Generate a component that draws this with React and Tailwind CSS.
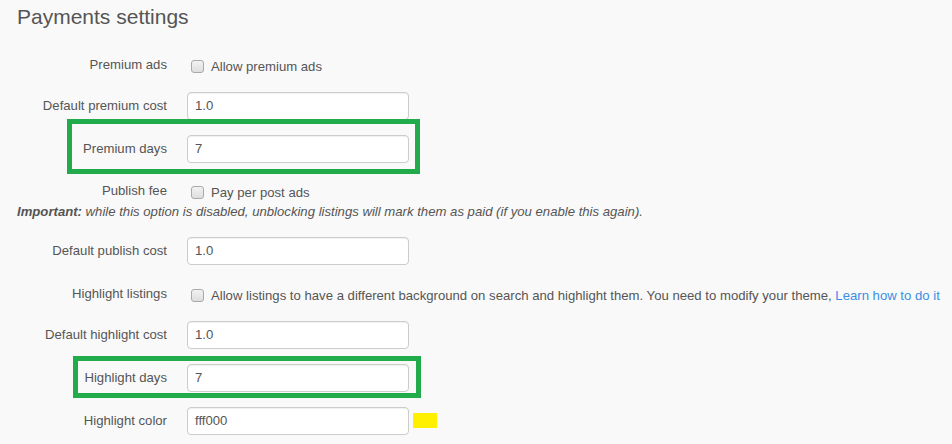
import React from "react";

const font = { fontFamily: '"Liberation Sans", Arial, sans-serif' };

function Label({ children }) {
  return (
    <div className="w-[167px] shrink-0 text-right text-[13.15px] text-[#555]">
      {children}
    </div>
  );
}

function TextInput({ value }) {
  return (
    <div className="flex h-[28px] w-[222px] items-center rounded-[4px] border border-[#ccc] bg-white pl-[7px] text-[13.15px] text-[#555] shadow-[inset_0_1px_1px_rgba(0,0,0,0.06)]">
      {value}
    </div>
  );
}

function Checkbox() {
  return (
    <span className="inline-block h-[13px] w-[13px] shrink-0 rounded-[3px] border border-[#a9a9a9] bg-gradient-to-b from-[#f2f2f2] to-[#dedede]" />
  );
}

function InputRow({ label, value, className = "", children }) {
  return (
    <div className={"relative flex items-center gap-[20px] " + className}>
      <Label>{label}</Label>
      <TextInput value={value} />
      {children}
    </div>
  );
}

function CheckRow({ label, text, className = "" }) {
  return (
    <div className={"flex h-[20px] items-start gap-[24px] " + className}>
      <div className="w-[167px] shrink-0 text-right text-[13.15px] leading-[20px] text-[#555]">
        {label}
      </div>
      <div className="flex items-start gap-[7px] whitespace-nowrap pt-[3px] text-[13.15px] leading-[20px] text-[#555]">
        <span className="mt-[2px] flex">
          <Checkbox />
        </span>
        <span className="-mt-[1px]">{text}</span>
      </div>
    </div>
  );
}

function Highlight({ className }) {
  return (
    <div
      className={
        "pointer-events-none absolute border-[5px] border-[#22ab4b] " + className
      }
    />
  );
}

export default function App() {
  return (
    <div className="min-h-[444px] w-full bg-[#f9f9f9]" style={font}>
      <div className="flex flex-col">
        <h1 className="ml-[17px] mt-[3px] h-[52px] text-[21px] leading-[28px] text-[#555]">
          Payments settings
        </h1>

        <CheckRow label="Premium ads" text="Allow premium ads" />

        <InputRow label="Default premium cost" value="1.0" className="mt-[17px]" />

        <InputRow label="Premium days" value="7" className="mt-[15px]">
          <Highlight className="left-[67px] top-[-16px] h-[55px] w-[353px]" />
        </InputRow>

        <CheckRow label="Publish fee" text="Pay per post ads" className="mt-[18px]" />

        <div className="ml-[17px] mt-[1px] h-[20px] text-[13.15px] italic leading-[20px] text-[#555]">
          <b>Important:</b> while this option is disabled, unblocking listings
          will mark them as paid (if you enable this again).
        </div>

        <InputRow label="Default publish cost" value="1.0" className="mt-[15px]" />

        <CheckRow
          label="Highlight listings"
          className="mt-[19px]"
          text={
            <>
              Allow listings to have a different background on search and
              highlight them. You need to modify your theme,{" "}
              <a className="text-[#3a8ee6]">Learn how to do it</a>
            </>
          }
        />

        <InputRow label="Default highlight cost" value="1.0" className="mt-[17px]" />

        <InputRow label="Highlight days" value="7" className="mt-[15px]">
          <Highlight className="left-[73px] top-[-8px] h-[42px] w-[348px]" />
        </InputRow>

        <InputRow label="Highlight color" value="fff000" className="mt-[15px]">
          <span className="-ml-[16px] mt-[-1px] h-[15px] w-[24px] bg-[#fff000]" />
        </InputRow>
      </div>
    </div>
  );
}
